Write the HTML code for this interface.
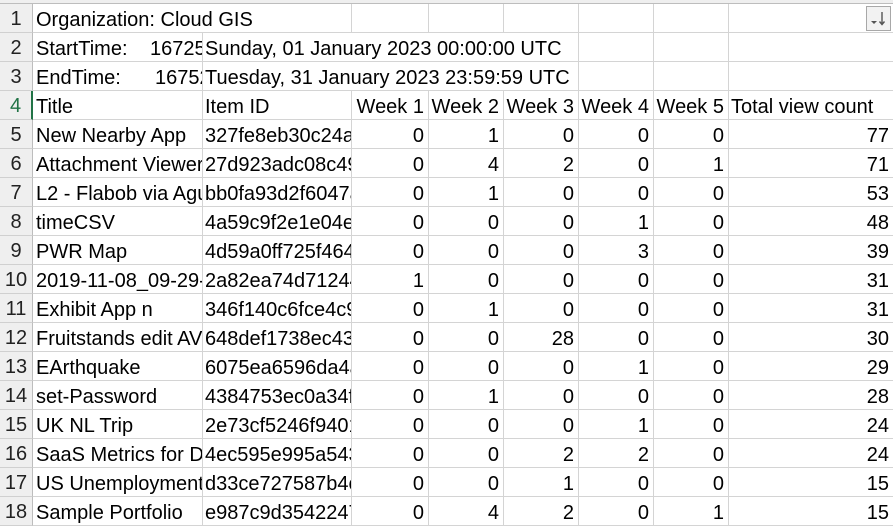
<!DOCTYPE html>
<html><head><meta charset="utf-8"><style>
body{margin:0;width:893px;height:526px;overflow:hidden;background:#fff;font-family:"Liberation Sans",Arial,sans-serif;font-size:20px;color:#000;position:relative}
.c{position:absolute;z-index:2;height:28px;line-height:32px;white-space:nowrap;overflow:hidden;box-sizing:border-box;padding:0 2px}
.r{text-align:right;padding-right:4px}
.h{position:absolute;z-index:3;left:0;width:33px;height:29px;line-height:31px;text-align:center;background:#efefef;color:#222;box-sizing:border-box;border-bottom:1px solid #d0d0d0;border-right:1px solid #bdbdbd}
.vl{position:absolute;z-index:1;top:0;width:1px;height:526px;background:#d4d4d4}
.hl{position:absolute;z-index:1;left:33px;height:1px;width:860px;background:#d4d4d4}
</style></head><body>
<div style="position:absolute;z-index:4;left:0;top:0;width:893px;height:3px;background:#efefef;border-bottom:1px solid #bdbdbd"></div>
<script>
var b=document.body;
var cols=[33,202,351,428,503,578,653,728,893];
for(var i=1;i<cols.length-1;i++){var d=document.createElement('div');d.className='vl';d.style.left=(cols[i])+'px';b.appendChild(d);}
for(var r=0;r<=18;r++){var d=document.createElement('div');d.className='hl';d.style.top=(3+r*29)+'px';b.appendChild(d);}
function cell(row,col,txt,right,span){var top=3+(row-1)*29;var d=document.createElement('div');d.className='c'+(right?' r':'');d.style.top=(top+1)+'px';d.style.left=(cols[col]+1)+'px';var w=span?span:(cols[col+1]-cols[col]-1);d.style.width=w+'px';d.style.background='#fff';d.textContent=txt;b.appendChild(d);return d;}
for(var r=1;r<=18;r++){var d=document.createElement('div');d.className='h';d.style.top=(3+(r-1)*29+1)+'px';d.textContent=r;if(r==4){d.style.color='#217346';d.style.borderRight='2px solid #217346';}b.appendChild(d);}
var o=cell(1,0,'Organization: Cloud GIS',0,317);o.style.zIndex=5;
cell(2,0,'StartTime:');cell(3,0,'EndTime:');
var n=document.createElement('div');n.className='c';n.style.cssText='top:33px;left:150px;width:52px;padding:0;text-align:left';n.textContent='1672531200';b.appendChild(n);
n=document.createElement('div');n.className='c';n.style.cssText='top:62px;left:155px;width:47px;padding:0;text-align:left';n.textContent='1675209599';b.appendChild(n);
cell(2,1,'Sunday, 01 January 2023 00:00:00 UTC',0,375);
cell(3,1,'Tuesday, 31 January 2023 23:59:59 UTC',0,375);
var hd=['Title','Item ID','Week 1','Week 2','Week 3','Week 4','Week 5','Total  view count'];
hd.forEach(function(t,i){cell(4,i,t,i>=2&&i<7,i==7?170:0);});
var data=[
['New Nearby App','327fe8eb30c24a1',0,1,0,0,0,77],
['Attachment Viewer','27d923adc08c49a',0,4,2,0,1,71],
['L2 - Flabob via Aguanga','bb0fa93d2f6047a',0,1,0,0,0,53],
['timeCSV','4a59c9f2e1e04ea',0,0,0,1,0,48],
['PWR Map','4d59a0ff725f464a',0,0,0,3,0,39],
['2019-11-08_09-29-1','2a82ea74d71244a',1,0,0,0,0,31],
['Exhibit App n','346f140c6fce4c9a',0,1,0,0,0,31],
['Fruitstands edit AVG','648def1738ec43a',0,0,28,0,0,30],
['EArthquake','6075ea6596da4a1',0,0,0,1,0,29],
['set-Password','4384753ec0a34fa',0,1,0,0,0,28],
['UK NL Trip','2e73cf5246f9401',0,0,0,1,0,24],
['SaaS Metrics for Dash','4ec595e995a543a',0,0,2,2,0,24],
['US Unemployment','d33ce727587b4ca',0,0,1,0,0,15],
['Sample Portfolio','e987c9d3542247a',0,4,2,0,1,15]];
data.forEach(function(row,i){row.forEach(function(v,j){cell(5+i,j,String(v),j>=2);});});
</script>
<div style="position:absolute;z-index:6;left:866px;top:6px;width:23px;height:23px;border:1px solid #a8a8a8;background:#f2f2f2">
<svg width="23" height="23" viewBox="0 0 23 23"><path d="M4 14 L10 14 L7 17 Z" fill="#555"/><path d="M15 5 V17 M12.5 14.5 L15 17.5 L17.5 14.5" stroke="#555" stroke-width="1.4" fill="none"/></svg>
</div>
</body></html>
